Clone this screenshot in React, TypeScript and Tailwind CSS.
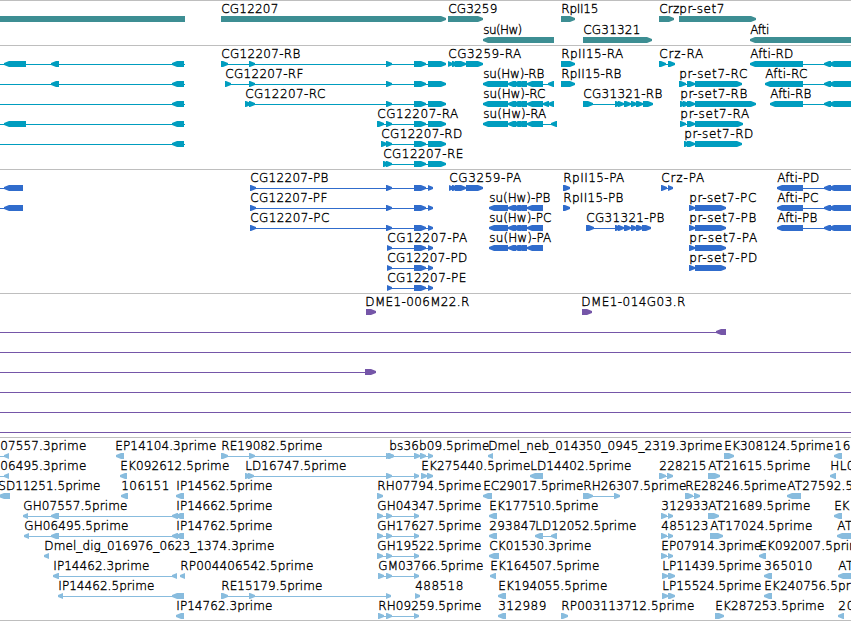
import React from 'react'

type Span = [number, number]

interface Feature {
  row: number
  // label text, left edge and right edge
  label?: [string, number, number]
  dir?: 'left' | 'right' | 'none'
  exons?: Span[]
  // connecting line, defaults to the full extent of the exons
  line?: Span
}

interface TrackProps {
  name: string
  className: string
  rowHeight?: number
  features: Feature[]
}

const WIDTH = 851

const f = (
  row: number,
  text: string,
  from: number,
  to: number,
  dir: 'left' | 'right',
  exons: Span[]
): Feature => ({ row, label: [text, from, to], dir, exons })

const genes: Feature[] = [
  { row: 0, dir: 'none', exons: [[-5, 185]] },
  f(0, 'CG12207', 221, 278, 'right', [[221, 446]]),
  f(0, 'CG3259', 448, 497, 'right', [[448, 483]]),
  f(1, 'su(Hw)', 483, 522, 'left', [[483, 554]]),
  f(0, 'RpII15', 561, 598, 'right', [[561, 575]]),
  f(1, 'CG31321', 583, 640, 'right', [[583, 652]]),
  f(0, 'Crz', 659, 679, 'right', [[659, 674]]),
  f(0, 'pr-set7', 679, 724, 'right', [[679, 756]]),
  f(1, 'Afti', 750, 769, 'left', [[750, 860]]),
]

const tail: Span[] = [[386, 392], [414, 426], [428, 446]]
const suHw: Span[] = [[508, 516], [513, 521], [517, 527], [527, 543]]
const cg31321: Span[] = [[615, 621], [618, 624], [624, 631], [631, 637], [636, 643]]
const aftiEnd: Span[] = [[824, 831], [829, 860]]

const transcripts: Feature[] = [
  { row: 0, dir: 'left', exons: [[4, 26], [51, 59], [172, 184]], line: [0, 185] },
  { row: 1, dir: 'left', exons: [[51, 59], [172, 184]], line: [0, 185] },
  { row: 2, dir: 'left', exons: [[172, 184]], line: [0, 185] },
  { row: 3, dir: 'left', exons: [[4, 26], [172, 184]], line: [0, 185] },
  { row: 4, dir: 'left', exons: [[172, 184]], line: [0, 185] },
  f(0, 'CG12207-RB', 221, 300, 'right', [[221, 228], [249, 255], ...tail]),
  f(1, 'CG12207-RF', 225, 303, 'right', [[225, 231], [249, 255], ...tail]),
  f(2, 'CG12207-RC', 245, 325, 'right', [[245, 251], [249, 255], ...tail]),
  f(3, 'CG12207-RA', 377, 458, 'right', [[377, 384], ...tail]),
  f(4, 'CG12207-RD', 381, 462, 'right', [[381, 387], ...tail]),
  f(5, 'CG12207-RE', 383, 463, 'right', [[383, 389], ...tail]),
  f(0, 'CG3259-RA', 448, 521, 'right', [[448, 453], [452, 458], [455, 466], [466, 483]]),
  f(1, 'su(Hw)-RB', 483, 544, 'left', [[483, 508], ...suHw, [548, 554]]),
  f(2, 'su(Hw)-RC', 483, 545, 'left', [[483, 508], ...suHw, [543, 549], [548, 554]]),
  f(3, 'su(Hw)-RA', 483, 546, 'left', [[483, 508], ...suHw, [551, 557]]),
  f(0, 'RpII15-RA', 561, 623, 'right', [[561, 575]]),
  f(1, 'RpII15-RB', 561, 621, 'right', [[561, 575]]),
  f(2, 'CG31321-RB', 583, 662, 'right', [[583, 593], ...cg31321, [643, 653]]),
  f(0, 'Crz-RA', 659, 703, 'right', [[659, 666], [668, 675]]),
  f(1, 'pr-set7-RC', 679, 747, 'right', [[679, 686], [687, 695], [695, 742]]),
  f(2, 'pr-set7-RB', 680, 747, 'right', [[680, 686], [683, 689], [687, 695], [695, 756]]),
  f(3, 'pr-set7-RA', 680, 749, 'right', [[680, 686], [687, 695], [695, 743]]),
  f(4, 'pr-set7-RD', 684, 753, 'right', [[684, 690], [687, 695], [695, 742]]),
  f(0, 'Afti-RD', 750, 793, 'left', [[750, 803], ...aftiEnd]),
  f(1, 'Afti-RC', 765, 807, 'left', [[765, 803], ...aftiEnd]),
  f(2, 'Afti-RB', 770, 811, 'left', [[770, 803], ...aftiEnd]),
]

const cdsTail: Span[] = [[414, 426], [428, 433]]

const proteins: Feature[] = [
  { row: 0, dir: 'left', exons: [[4, 23]], line: [0, 23] },
  { row: 1, dir: 'left', exons: [[4, 23]], line: [0, 23] },
  f(0, 'CG12207-PB', 250, 328, 'right', [[250, 256], [386, 392], ...cdsTail]),
  f(1, 'CG12207-PF', 250, 327, 'right', [[250, 256], [386, 392], ...cdsTail]),
  f(2, 'CG12207-PC', 250, 329, 'right', [[250, 256], [386, 392], ...cdsTail]),
  f(3, 'CG12207-PA', 387, 467, 'right', [[387, 392], ...cdsTail]),
  f(4, 'CG12207-PD', 387, 467, 'right', [[387, 392], ...cdsTail]),
  f(5, 'CG12207-PE', 387, 466, 'right', [[387, 392], ...cdsTail]),
  f(0, 'CG3259-PA', 449, 521, 'right', [[449, 454], [452, 458], [455, 466], [466, 483]]),
  f(1, 'su(Hw)-PB', 489, 550, 'left', [[489, 508], ...suHw]),
  f(2, 'su(Hw)-PC', 489, 551, 'left', [[489, 508], ...suHw]),
  f(3, 'su(Hw)-PA', 489, 551, 'left', [[489, 508], ...suHw]),
  f(0, 'RpII15-PA', 563, 624, 'right', [[563, 570]]),
  f(1, 'RpII15-PB', 563, 623, 'right', [[563, 570]]),
  f(2, 'CG31321-PB', 586, 664, 'right', [[586, 594], ...cg31321, [642, 651]]),
  f(0, 'Crz-PA', 661, 704, 'right', [[661, 667], [668, 673]]),
  f(1, 'pr-set7-PC', 689, 756, 'right', [[689, 695], [695, 726]]),
  f(2, 'pr-set7-PB', 689, 756, 'right', [[689, 695], [695, 726]]),
  f(3, 'pr-set7-PA', 689, 757, 'right', [[689, 695], [695, 726]]),
  f(4, 'pr-set7-PD', 689, 757, 'right', [[689, 695], [695, 726]]),
  f(0, 'Afti-PD', 777, 819, 'left', [[777, 803], ...aftiEnd]),
  f(1, 'Afti-PC', 777, 818, 'left', [[777, 803], ...aftiEnd]),
  f(2, 'Afti-PB', 777, 817, 'left', [[777, 803], ...aftiEnd]),
]

const bacEnds: Feature[] = [
  f(0, 'DME1-006M22.R', 365, 469, 'right', [[366, 376]]),
  f(0, 'DME1-014G03.R', 581, 685, 'right', [[582, 592]]),
  { row: 1, dir: 'left', exons: [[716, 726]], line: [0, 726] },
  { row: 2, line: [0, WIDTH] },
  { row: 3, dir: 'right', exons: [[365, 376]], line: [0, 376] },
  { row: 4, line: [0, WIDTH] },
  { row: 5, line: [0, WIDTH] },
  { row: 6, line: [0, WIDTH] },
]

const ghEst: Span[] = [[377, 383], [386, 392], [414, 419]]
const lateEst: Span[] = [[378, 384], [386, 392], [414, 419]]
const crzEst: Span[] = [[661, 667], [668, 673]]

const ests: Feature[] = [
  { ...f(0, '07557.3prime', 0, 86, 'left', [[4, 9]]), line: [0, 9] },
  f(0, 'EP14104.3prime', 115, 216, 'left', [[116, 124]]),
  f(0, 'RE19082.5prime', 221, 322, 'right', [[221, 228], [249, 255], [386, 392], [388, 394]]),
  f(0, 'bs36b09.5prime', 389, 489, 'right', [[388, 394], [414, 420], [420, 426], [428, 433]]),
  f(0, 'Dmel_neb_014350_0945_2319.3prime', 488, 722, 'left', [[488, 493]]),
  f(0, 'EK308124.5prime', 724, 833, 'right', [[724, 734]]),
  f(0, '16', 834, 850, 'left', [[834, 842]]),

  { ...f(1, '06495.3prime', 0, 86, 'left', [[4, 9]]), line: [0, 9] },
  f(1, 'EK092612.5prime', 120, 229, 'left', [[120, 127]]),
  f(1, 'LD16747.5prime', 245, 346, 'right', [[245, 251], [248, 254], [386, 392], [414, 419]]),
  f(1, 'EK275440.5prime', 421, 530, 'right', [[421, 427], [427, 433]]),
  f(1, 'LD14402.5prime', 530, 631, 'left', [[530, 543]]),
  f(1, '228215', 659, 706, 'right', [[659, 666], [667, 673]]),
  f(1, 'AT21615.5prime', 708, 810, 'right', [[708, 720]]),
  f(1, 'HL0', 830, 854, 'left', [[830, 836]]),

  f(2, 'SD11251.5prime', -2, 100, 'left', [[-1, 10]]),
  f(2, '106151', 121, 169, 'left', [[121, 128]]),
  f(2, 'IP14562.5prime', 176, 272, 'left', [[176, 184]]),
  f(2, 'RH07794.5prime', 377, 481, 'right', [[377, 383]]),
  f(2, 'EC29017.5prime', 483, 583, 'left', [[483, 492]]),
  f(2, 'RH26307.5prime', 583, 686, 'right', [[583, 593], [614, 620]]),
  f(2, 'RE28246.5prime', 685, 786, 'right', [[685, 693], [694, 700]]),
  f(2, 'AT27592.5prime', 787, 889, 'left', [[787, 801]]),

  f(3, 'GH07557.5prime', 23, 127, 'left', [[23, 28], [51, 59], [172, 178], [176, 184]]),
  f(3, 'IP14662.5prime', 176, 272, 'left', [[176, 184]]),
  f(3, 'GH04347.5prime', 377, 481, 'right', ghEst),
  f(3, 'EK177510.5prime', 489, 598, 'left', [[489, 497]]),
  f(3, '312933', 661, 708, 'right', crzEst),
  f(3, 'AT21689.5prime', 708, 810, 'right', [[708, 719]]),
  f(3, 'EK', 834, 849, 'left', [[834, 842]]),

  f(4, 'GH06495.5prime', 24, 128, 'left', [[24, 29], [51, 59], [172, 178], [176, 184]]),
  f(4, 'IP14762.5prime', 176, 272, 'left', [[176, 184]]),
  f(4, 'GH17627.5prime', 377, 481, 'right', ghEst),
  f(4, '293847', 489, 536, 'left', [[489, 497]]),
  f(4, 'LD12052.5prime', 535, 636, 'left', [[535, 543], [551, 557]]),
  f(4, '485123', 661, 708, 'right', crzEst),
  f(4, 'AT17024.5prime', 710, 812, 'right', [[710, 723]]),
  f(4, 'AT', 837, 852, 'left', [[837, 860]]),

  f(5, 'Dmel_dig_016976_0623_1374.3prime', 44, 274, 'left', [[44, 49]]),
  f(5, 'GH19522.5prime', 377, 481, 'right', ghEst),
  f(5, 'CK01530.3prime', 489, 591, 'left', [[489, 499]]),
  f(5, 'EP07914.3prime', 661, 761, 'right', crzEst),
  f(5, 'EK092007.5prime', 759, 868, 'left', [[759, 766]]),

  f(6, 'IP14462.3prime', 53, 149, 'left', [[53, 59], [172, 177]]),
  f(6, 'RP004406542.5prime', 180, 313, 'left', [[180, 185]]),
  f(6, 'GM03766.5prime', 378, 483, 'right', lateEst),
  f(6, 'EK164507.5prime', 490, 599, 'left', [[490, 496]]),
  f(6, 'LP11439.5prime', 662, 761, 'right', [[662, 668], [668, 675]]),
  f(6, '365010', 764, 812, 'left', [[764, 772]]),
  f(6, 'AT', 838, 853, 'left', [[838, 860]]),

  f(7, 'IP14462.5prime', 58, 154, 'left', [[58, 63], [172, 184]]),
  f(7, 'RE15179.5prime', 221, 322, 'right', [[221, 228], [249, 255], [386, 391]]),
  f(7, '488518', 415, 463, 'right', [[415, 420]]),
  f(7, 'EK194055.5prime', 498, 607, 'left', [[498, 506]]),
  f(7, 'LP15524.5prime', 662, 761, 'right', [[662, 668], [668, 675]]),
  f(7, 'EK240756.5prime', 764, 873, 'left', [[764, 772]]),

  f(8, 'IP14762.3prime', 176, 272, 'left', [[176, 184]]),
  f(8, 'RH09259.5prime', 378, 481, 'right', lateEst),
  f(8, '312989', 498, 546, 'left', [[498, 506]]),
  f(8, 'RP003113712.5prime', 561, 694, 'right', [[561, 568]]),
  f(8, 'EK287253.5prime', 715, 824, 'right', [[715, 724]]),
  f(8, '20', 838, 854, 'left', [[838, 844]]),
]

const exonPoints = ([a, b]: Span, y: number, dir: Feature['dir']) => {
  const tip = Math.min(5, b - a)
  if (dir === 'right') {
    return `${a},${y} ${b - tip},${y} ${b},${y + 2} ${b},${y + 4} ${b - tip},${y + 6} ${a},${y + 6}`
  }
  if (dir === 'left') {
    return `${b},${y} ${a + tip},${y} ${a},${y + 2} ${a},${y + 4} ${a + tip},${y + 6} ${b},${y + 6}`
  }
  return `${a},${y} ${b},${y} ${b},${y + 6} ${a},${y + 6}`
}

const FeatureGlyph = ({ feature, rowHeight }: { feature: Feature; rowHeight: number }) => {
  const { row, label, dir, exons = [], line } = feature
  const top = row * rowHeight
  const [from, to] = line ?? [exons[0][0], exons[exons.length - 1][1]]

  return (
    <g>
      <rect x={from} y={top + 18} width={to - from} height={1} />
      {exons.map((exon, i) => (
        <polygon key={i} points={exonPoints(exon, top + 15, dir)} />
      ))}
      {label && (
        <text
          x={label[1] + 0.3}
          y={top + 12}
          textLength={label[2] - label[1]}
          className="fill-black stroke-black stroke-[0.35px] text-[12px] font-extralight"
        >
          {label[0]}
        </text>
      )}
    </g>
  )
}

const Track = ({ name, className, rowHeight = 20, features }: TrackProps) => {
  return (
    <section
      aria-label={name}
      className={`w-full shrink-0 border-t border-[#bebebe] overflow-hidden ${className}`}
    >
      <svg width={WIDTH} height="100%" className="block fill-current">
        {features.map((feature, i) => (
          <FeatureGlyph key={i} feature={feature} rowHeight={rowHeight} />
        ))}
      </svg>
    </section>
  )
}

const App = () => {
  return (
    <main className="flex flex-col w-[851px] h-[621px] overflow-hidden bg-white font-['DejaVu_Sans',sans-serif] border-b border-[#bebebe]">
      <Track name="Genes" className="h-[45px] text-[#3d8e93]" rowHeight={21} features={genes} />
      <Track name="Transcripts" className="h-[124px] text-[#009dbf]" features={transcripts} />
      <Track name="Proteins" className="h-[124px] text-[#306ccc]" features={proteins} />
      <Track name="BAC ends" className="h-[144px] text-[#7556a8]" features={bacEnds} />
      <Track name="ESTs" className="h-[183px] text-[#88bcde]" features={ests} />
    </main>
  )
}

export default App
